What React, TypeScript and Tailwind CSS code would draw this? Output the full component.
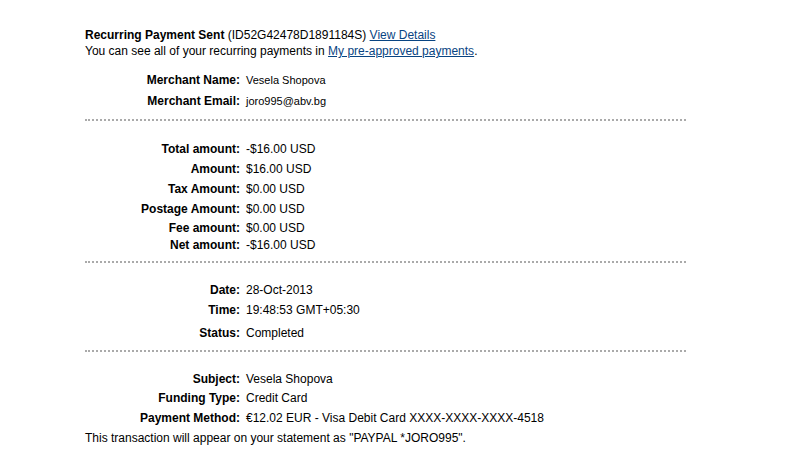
const rows1 = [
  { label: "Merchant Name:", value: "Vesela Shopova" },
  { label: "Merchant Email:", value: "joro995@abv.bg" },
];

const amounts = [
  { label: "Total amount:", value: "-$16.00 USD", h: "h-[20px]" },
  { label: "Amount:", value: "$16.00 USD", h: "h-[20px]" },
  { label: "Tax Amount:", value: "$0.00 USD", h: "h-[20px]" },
  { label: "Postage Amount:", value: "$0.00 USD", h: "h-[20px]" },
  { label: "Fee amount:", value: "$0.00 USD", h: "h-[18px]" },
  { label: "Net amount:", value: "-$16.00 USD", h: "h-[16px]" },
];

function Row({ label, value, h = "h-[20px]", small = false }: { label: string; value: string; h?: string; small?: boolean }) {
  return (
    <div className={`flex items-center ${h}`}>
      <div className="w-[155px] text-right font-bold text-[12px]">{label}</div>
      <div className={`pl-[6px] ${small ? "text-[11px]" : "text-[12px]"}`}>{value}</div>
    </div>
  );
}

function Dots({ mt }: { mt: string }) {
  return <div className={`${mt} border-t-2 border-dotted border-[#aaaaaa]`} />;
}

export default function App() {
  return (
    <div className="w-[787px] h-[450px] bg-white text-black font-['Liberation_Sans',Arial,sans-serif] leading-[16px]">
      <div className="w-[601px] ml-[85px] pt-[27px]">
        <div className="text-[12px]">
          <span className="font-bold">Recurring Payment Sent</span> (ID52G42478D1891184S){" "}
          <a href="#" className="text-[#084482] underline">View Details</a>
        </div>
        <div className="text-[12px]">
          You can see all of your recurring payments in{" "}
          <a href="#" className="text-[#084482] underline">My pre-approved payments</a>.
        </div>

        <div className="mt-[10px]">
          {rows1.map((r) => (
            <Row key={r.label} label={r.label} value={r.value} h="h-[21px]" small />
          ))}
        </div>
        <Dots mt="mt-[8px]" />

        <div className="mt-[18px]">
          {amounts.map((r) => (
            <Row key={r.label} label={r.label} value={r.value} h={r.h} />
          ))}
        </div>
        <Dots mt="mt-[8px]" />

        <div className="mt-[17px]">
          <Row label="Date:" value="28-Oct-2013" />
          <Row label="Time:" value="19:48:53 GMT+05:30" />
          <div className="mt-[3px]">
            <Row label="Status:" value="Completed" />
          </div>
        </div>
        <Dots mt="mt-[7px]" />

        <div className="mt-[17px]">
          <Row label="Subject:" value="Vesela Shopova" h="h-[19px]" />
          <Row label="Funding Type:" value="Credit Card" />
          <Row label="Payment Method:" value="€12.02 EUR - Visa Debit Card XXXX-XXXX-XXXX-4518" />
          <div className="h-[20px] flex items-center text-[12px]">
            This transaction will appear on your statement as "PAYPAL *JORO995".
          </div>
        </div>
      </div>
    </div>
  );
}
